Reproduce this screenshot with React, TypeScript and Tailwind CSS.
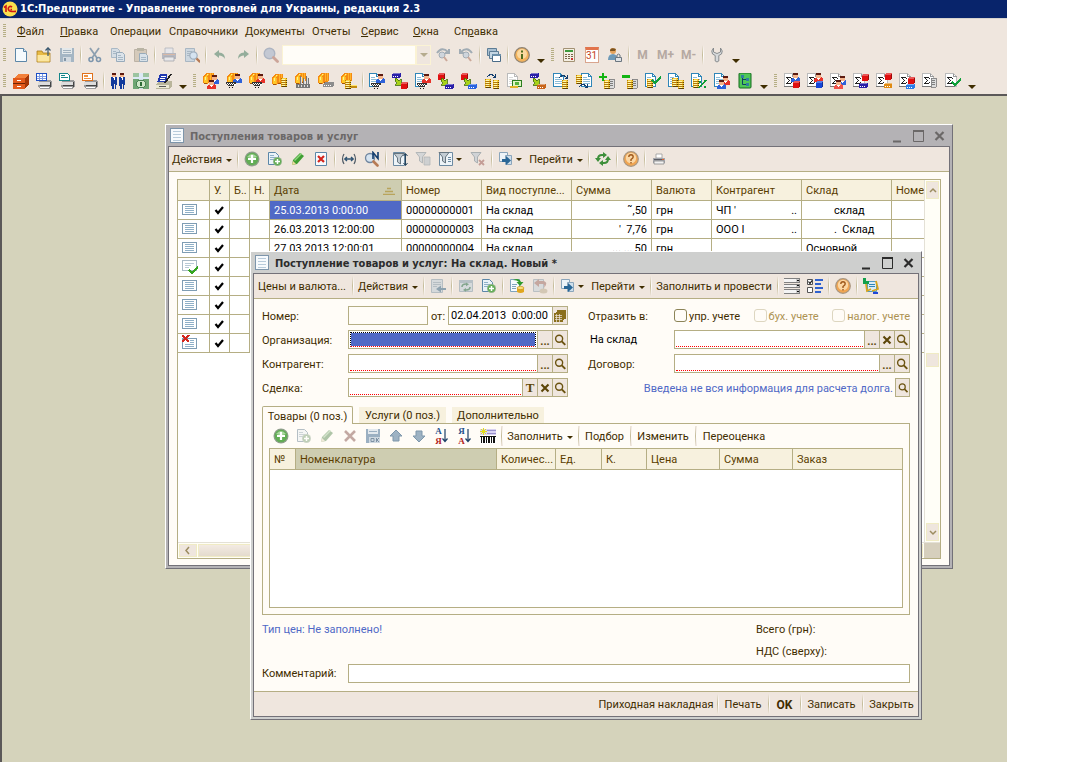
import type { ReactNode } from "react";

/* ---------- small drawing parts shared by the icons ---------- */

type Part = { x?: number; y?: number; c?: string };

const at = (x = 0, y = 0) => `translate(${x} ${y})`;

function Doc({ x, y, c = "#2f86b8" }: Part) {
  return (
    <g transform={at(x, y)}>
      <path d="M.5 .5h7l3 3v10H.5z" fill="#fff" stroke={c} />
      <path d="M7.5 .5v3h3" fill="none" stroke={c} />
      <path d="M2 4.5h4M2 6.5h7M2 8.5h7M2 10.5h7" stroke={c} opacity=".55" />
    </g>
  );
}

function Person({ x, y, c = "#2e62d9" }: Part) {
  return (
    <g transform={at(x, y)}>
      <path d="M0 9V6l2-2h5l2 2v3z" fill={c} />
      <path d="M2 1h5v4H2z" fill="#f4b48c" />
      <path d="M2 0h5v2H2z" fill="#5c1a10" />
      <path d="M3 5h3L4.500 7.500z" fill="#fff" />
    </g>
  );
}

function Cart({ x, y }: Part) {
  return (
    <g transform={at(x, y)}>
      <path d="M0 0h10v2L8 4H2L0 2z" fill="#fff" />
      <path d="M0 0h10v1H0zM0 1h1v1H0zM2 1h1v1H2zM4 1h1v1H4zM6 1h1v1H6zM8 1h2v1H8zM1 2h1v1H1zM3 2h1v1H3zM5 2h1v1H5zM7 2h1v1H7zM2 3h6v1H2z" fill="#333" />
      <path d="M3 5h1v1H3zM6 5h1v1H6z" fill="#111" />
    </g>
  );
}

function Coins({ x, y }: Part) {
  return (
    <g transform={at(x, y)}>
      <path d="M0 0h6v9H0z" fill="#b47a08" />
      <path d="M1 0h4v1H1zM0 1h6v1H0zM0 3h6v1H0zM0 5h6v1H0zM0 7h6v1H0z" fill="#f7cf3c" />
      <path d="M1 1h3v1H1zM1 3h3v1H1zM1 5h3v1H1zM1 7h3v1H1z" fill="#fff6b0" />
      <path d="M5 2h1v1H5zM5 4h1v1H5zM5 6h1v1H5zM1 8h5v1H1z" fill="#5e4104" />
    </g>
  );
}

function Slice({ x, y }: Part) {
  return (
    <g transform={at(x, y)}>
      <path d="M3 0h7l1 1v7l-2 1H6l-2 2H1L0 9V4z" fill="#f58a12" />
      <path d="M4 1h2L4 4v6H1V5z" fill="#ffc928" />
      <path d="M7 0h1v8H7zM9 0h1v8H9zM4 4h1v6H4z" fill="#ffb52a" />
      <path d="M2 4h1v3H2zM4 1h1v1H4z" fill="#fff08a" />
      <path d="M1 10h3v1H1zM6 9h3v1H6z" fill="#a3520a" />
    </g>
  );
}

function Cube({ x, y, c = "#e01010" }: Part) {
  return (
    <g transform={at(x, y)}>
      <path d="M0 2l1-2h6v5l-1 2H0z" fill={c} />
      <path d="M1 0h6L6 2H0z" fill="#fff" opacity=".3" />
      <path d="M6 2l1-2v5l-1 2z" fill="#000" opacity=".3" />
    </g>
  );
}

function Box({ x, y, c = "#2a1fa8" }: Part) {
  return (
    <g transform={at(x, y)}>
      <path d="M0 1l1-1h8v3L8 5H0z" fill={c} />
      <path d="M1 3h1v1H1zM3 3h1v1H3zM5 3h1v1H5z" fill="#fff" />
      <path d="M1 0h7v1H1z" fill="#fff" opacity=".4" />
    </g>
  );
}

function Cash({ x, y }: Part) {
  return (
    <g transform={at(x, y)}>
      <path d="M.5 .5h9v6h-9z" fill="#dff5c4" stroke="#2b7d1e" />
      <path d="M3 2h4v3H3z" fill="#58b23c" />
    </g>
  );
}

const GreenArrow = () => <path d="M4 5l3 3 2-2v6H3l2-2-2-3z" fill="#a8d21a" stroke="#3c6b00" strokeWidth=".8" />;
const Arc = ({ x, y }: Part) => (
  <path transform={at(x, y)} d="M0 3Q4-2 8 3M8.500 0v3.500H5.500" fill="none" stroke="#123d6e" strokeWidth="1.200" />
);
const Tick = ({ x, y, c = "#0fa03a" }: Part) => (
  <path transform={at(x, y)} d="M0 3l3 3 6-6" fill="none" stroke={c} strokeWidth="2.400" />
);
const Pages = ({ x, y }: Part) => (
  <g transform={at(x, y)}>
    <path d="M0 0h5v9H0z" fill="#ddd" stroke="#777" strokeWidth=".8" />
    <path d="M1 2h3M1 4h3M1 6h3" stroke="#666" strokeWidth=".8" />
  </g>
);
const SumDoc = ({ children }: { children?: ReactNode }) => (
  <>
    <path d="M.5 .5h8l3 3v9.500H.5z" fill="#fff" stroke="#bbb" />
    <path d="M8.500 .5v3h3" fill="none" stroke="#999" />
    <path d="M0 13h10v1H0z" fill="#777" />
    <path d="M2 4h5v1H2zM3 5h1v1H3zM4 6h1v1H4zM5 7h1v1H5zM4 8h1v1H4zM3 9h1v1H3zM2 10h5v1H2zM7 5h1v1H7zM7 9h1v1H7z" fill="#222" />
    {children}
  </>
);
const PrinterBase = ({ children }: { children?: ReactNode }) => (
  <>
    <path d="M2 9l3-2h10l1 2v4l-2 3H4l-2-2z" fill="#9a9a9a" />
    <path d="M2 9h12v3H2z" fill="#ddd" />
    <path d="M4 12.500h10M14.500 9v5" stroke="#444" />
    <path d="M4 14h9v1H4z" fill="#fff" />
    {children}
  </>
);
const Funnel = ({ x, y, c = "#67757f" }: Part) => (
  <path transform={at(x, y)} d="M0 .5h10L6.500 5v6l-3-2V5z" fill="#c3ccd3" stroke={c} />
);
const Sheet = ({ c = "#5c87a8" }: Part) => (
  <>
    <path d="M2.500 1.500h8l3 3v10h-11z" fill="#f5fafd" stroke={c} />
    <path d="M10.500 1.500v3h3" fill="#dbe8f0" stroke={c} />
  </>
);
const GreenPlus = ({ x, y }: Part) => (
  <g transform={at(x, y)}>
    <circle cx="4.500" cy="4.500" r="4.500" fill="#8fb586" />
    <circle cx="4.500" cy="4.500" r="3.500" fill="#5fac52" />
    <path d="M4.500 2v5M2 4.500h5" stroke="#fff" strokeWidth="1.500" />
  </g>
);
const Lens = ({ x, y, c = "#7187a0" }: Part) => (
  <g transform={at(x, y)}>
    <path d="M6.500 6.500l4 4" stroke="#b77b55" strokeWidth="2.400" strokeLinecap="round" />
    <circle cx="4.500" cy="4.500" r="3.700" fill="#d5e3f0" stroke={c} strokeWidth="1.200" />
  </g>
);

const art: Record<string, ReactNode> = {
  new: <Sheet />,
  open: (
    <>
      <path d="M1 4h5l1 2h7v9H1z" fill="#e8bb45" stroke="#a97b1c" strokeWidth=".8" />
      <path d="M1.500 8h12v6.500h-12z" fill="#fbe6a0" />
      <path d="M12 9V1M9.500 3.500L12 .8l2.500 2.700" fill="none" stroke="#37566e" strokeWidth="1.200" />
    </>
  ),
  save: (
    <>
      <path d="M1 1h14v14H1z" fill="#a5b6c4" />
      <path d="M3 1h10v6H3z" fill="#e3e8ea" />
      <path d="M4 3.500h8M4 5.500h8" stroke="#a2b2bf" />
      <path d="M4 10h8v5H4z" fill="#d3dae0" />
      <path d="M5 11h2v3H5z" fill="#8496a6" />
    </>
  ),
  cut: (
    <>
      <path d="M3 1l7 10M12 1L5 11" stroke="#8ea0b0" strokeWidth="1.800" />
      <circle cx="4" cy="12.500" r="2" fill="none" stroke="#7d96ad" strokeWidth="1.600" />
      <circle cx="11.500" cy="12.500" r="2" fill="none" stroke="#7d96ad" strokeWidth="1.600" />
    </>
  ),
  copy: (
    <>
      <path d="M1.500 1.500h6l2 2v7h-8z" fill="#d5dde4" stroke="#a9b9c6" />
      <path d="M6.500 5.500h6l2 2v7h-8z" fill="#dbe3ea" stroke="#98abbb" />
      <path d="M8 8.500h3M8 10.500h5M8 12.500h5M3 4.500h3M3 6.500h3" stroke="#a6b7c5" />
    </>
  ),
  paste: (
    <>
      <path d="M1.500 2.500h12v12h-12z" fill="#d5cabb" stroke="#bcb3a6" />
      <path d="M4 1h7v3H4z" fill="#b9b4a4" />
      <path d="M6.500 6.500h6l2 2v6h-8z" fill="#d9e2e9" stroke="#98abbb" />
      <path d="M8 10.500h5M8 12.500h5" stroke="#a6b7c5" />
    </>
  ),
  print: (
    <>
      <path d="M4 1h8v6H4z" fill="#e6e6ea" stroke="#b3b5bb" strokeWidth=".8" />
      <path d="M1 6h14v6H1z" fill="#b6b8c0" />
      <path d="M2 7h12v1H2z" fill="#d8b8a6" />
      <path d="M3 10h10v4H3z" fill="#e8e8ea" stroke="#a3a5ab" strokeWidth=".8" />
    </>
  ),
  preview: (
    <>
      <path d="M1.500 1.500h9v13h-9z" fill="#cdd7e0" stroke="#a9b7c3" />
      <path d="M3 4.500h5M3 6.500h3M3 8.500h3" stroke="#a9b7c3" />
      <Lens x={5} y={4} c="#a0afbd" />
    </>
  ),
  undo: <path d="M2 7l5-4v2.500q6 0 6 6.500-2-3.500-6-3.500V11z" fill="#94ad9b" />,
  redo: <path d="M14 7L9 3v2.500q-6 0-6 6.500 2-3.500 6-3.500V11z" fill="#94ad9b" />,
  search: (
    <g opacity=".6">
      <circle cx="6.500" cy="6.500" r="5.300" fill="#a6b5cc" stroke="#8294b0" strokeWidth="1.400" />
      <path d="M10.500 10.500l4 4" stroke="#b57a6c" strokeWidth="2.800" strokeLinecap="round" />
    </g>
  ),
  findNext: (
    <g opacity=".75">
      <path d="M2 6Q7-1 13 5M14 2v4h-4" fill="none" stroke="#8799a6" strokeWidth="2" />
      <circle cx="7" cy="8" r="3" fill="#c4d0dc" stroke="#8799a6" />
      <path d="M9 10l3 4" stroke="#c09482" strokeWidth="2" />
    </g>
  ),
  findPrev: (
    <g opacity=".75">
      <path d="M14 6Q9-1 3 5M2 2v4h4" fill="none" stroke="#8799a6" strokeWidth="2" />
      <circle cx="8" cy="8" r="3" fill="#c4d0dc" stroke="#8799a6" />
      <path d="M10 10l3 4" stroke="#c09482" strokeWidth="2" />
    </g>
  ),
  windows: (
    <>
      <path d="M1.500 1.500h9v7h-9z" fill="#a9c0d2" stroke="#5d7d96" />
      <path d="M3.500 4.500h9v7h-9z" fill="#c5d6e3" stroke="#5d7d96" />
      <path d="M6.500 7.500h8v7h-8z" fill="#fff" stroke="#4a6c88" />
      <path d="M6 7h9v2H6z" fill="#6b8faa" />
    </>
  ),
  info: (
    <>
      <circle cx="8" cy="8" r="7.300" fill="#f3b35c" stroke="#8e8271" strokeWidth="1.200" />
      <circle cx="8" cy="7" r="5" fill="#fbd9a0" />
      <path d="M7 3.500h2v2H7zM7 7h2v5H7z" fill="#4f6d1d" />
    </>
  ),
  calc: (
    <>
      <path d="M2.500 1.500h11v13h-11z" fill="#f4efe2" stroke="#a39274" />
      <path d="M4 3h8v2H4z" fill="#3c9a3c" />
      <path d="M4 7h2v1H4zM7 7h2v1H7zM10 7h2v1h-2zM4 9h2v1H4zM7 9h2v1H7zM10 9h2v1h-2zM4 11h2v1H4zM7 11h2v1H7z" fill="#77654a" />
      <path d="M10 11h2v2h-2z" fill="#c33" />
    </>
  ),
  lockUser: (
    <>
      <circle cx="6" cy="4" r="3" fill="#e3a35c" />
      <path d="M3 4q0-4 6-2l-1 2z" fill="#7b5320" />
      <path d="M1 13q0-6 5-6 4 0 5 6z" fill="#6e9ab8" />
      <path d="M8.500 10.500h6v4h-6z" fill="#dfe3e6" stroke="#6b7680" />
      <path d="M10 10V8q1.500-1.800 3 0v2" fill="none" stroke="#6b7680" />
    </>
  ),
  wrench: (
    <path d="M4.500 1v4l3.500 1.500L11.500 5V1q3 3 1 6L9.800 8.500V14q-1.800 2-3.600 0V8.500L3.500 7q-2-3 1-6z" fill="#d6d9db" stroke="#808487" strokeWidth=".9" />
  ),
  cabinet: (
    <>
      <path d="M1 5l4-4h11v10l-4 5H1z" fill="#a53606" />
      <path d="M1 5l4-4h11l-4 4z" fill="#f2803a" />
      <path d="M0 5h12v5H0zM0 11h12v5H0z" fill="#e2591a" />
      <path d="M4 7h4v1H4zM4 13h4v1H4z" fill="#fff" />
      <path d="M0 10h12v1H0z" fill="#6e2402" />
    </>
  ),
  printBlue: (
    <PrinterBase>
      <path d="M.5 .5h10v7H.5z" fill="#fff" stroke="#1e4fc4" />
      <path d="M1 3h9v1H1zM1 5h9v1H1zM3 1h1v6H3zM6 1h1v6H6z" fill="#7f9be4" />
    </PrinterBase>
  ),
  printTeal: (
    <PrinterBase>
      <path d="M.5 .5h8l2 2v5H.5z" fill="#fff" stroke="#14868a" />
      <path d="M2 2h4v1H2zM2 4h7v1H2z" fill="#14868a" />
    </PrinterBase>
  ),
  printOrange: (
    <PrinterBase>
      <path d="M.5 .5h10v7H.5z" fill="#fff" stroke="#e0701a" />
      <path d="M2 2h4v2H2zM2 5h7v1H2z" fill="#f0913f" />
    </PrinterBase>
  ),
  men: (
    <>
      <path d="M1 4h6v5l-1 7H2L1 9zM9 4h6v5l-1 7h-4L9 9z" fill="#123a9c" />
      <path d="M2 0h4v2H2zM10 0h4v2h-4z" fill="#5c1a10" />
      <path d="M2 2h4v2H2zM10 2h4v2h-4z" fill="#f4b48c" />
      <path d="M3 4h2v4zM11 4h2v4z" fill="#fff" />
      <path d="M4 11h1v5H4zM12 11h1v5h-1z" fill="#efe6de" />
    </>
  ),
  money: (
    <>
      <path d="M0 0h16v4H0z" fill="#9cc4a0" />
      <path d="M0 4h16v2H0z" fill="#dce9f5" />
      <path d="M0 6h16v10H0z" fill="#6fa573" />
      <path d="M6 6h4v10H6z" fill="#cfe0e4" />
      <ellipse cx="8" cy="11" rx="5" ry="3.500" fill="#cfe6c8" stroke="#4c8353" />
      <path d="M6 0h4v4H6z" fill="#dce9f5" />
      <path d="M7 9h2v4H7z" fill="#2c6a35" />
    </>
  ),
  register: (
    <>
      <path d="M0 11l4-3h12v5l-2 3H0z" fill="#b9b59b" />
      <path d="M0 12h13v3H0z" fill="#ece9d4" />
      <path d="M4 1h7v8H1z" fill="#2038b0" />
      <path d="M5 3h5v1H5zM4 5h5v1H4zM4 7h5v1H4z" fill="#fff" />
      <path d="M15 1l-6 9" stroke="#222" strokeWidth="1.500" />
      <path d="M3 13h7v1H3z" fill="#555" />
    </>
  ),
  c1: <><Slice x={0} y={0} /><Person x={7} y={2} /><Person x={4} y={7} c="#e8322a" /></>,
  c2: <><Slice x={1} y={0} /><Person x={7} y={1} /><Cart x={0} y={9} /></>,
  c3: <><Slice x={0} y={0} /><Person x={7} y={1} c="#e8322a" /><Cart x={3} y={9} /></>,
  c4: <><Slice x={0} y={1} /><Coins x={9} y={5} /></>,
  c5: (
    <>
      <Slice x={0} y={0} />
      <path d="M1 11h14v4H1zM5 3h1v8H5zM8 5h1v6H8zM11 3h1v8h-1zM13 5h1v6h-1z" fill="#777" />
      <path d="M6 4h1v7H6zM9 6h1v5H9zM12 4h1v7h-1zM3 12h1v2H3zM6 12h1v2H6zM9 12h1v2H9zM12 12h1v2h-1z" fill="#ddd" />
    </>
  ),
  c6: <><Slice x={0} y={0} /><path d="M5 11l2-2h9v3l-1 2H5z" fill="#8c8c8c" /><path d="M6 12h1v1H6zM8 12h1v1H8zM10 12h1v1h-1zM12 12h1v1h-1z" fill="#fff" /></>,
  c7: <><Slice x={0} y={0} /><Coins x={4} y={7} /><path d="M10 12h6v3h-6z" fill="#c28b10" /><path d="M10 12h6v1h-6z" fill="#ffe36b" /></>,
  d1: <><Doc /><Person x={7} y={1} /><Cart x={2} y={10} /></>,
  d2: <><Box x={0} y={0} /><GreenArrow /><Cube x={9} y={9} /></>,
  d3: <><Doc /><Person x={7} y={1} c="#e8322a" /><Cart x={2} y={10} /></>,
  d4: <><Cube x={0} y={0} /><GreenArrow /><Box x={7} y={11} /></>,
  d5: <><Cube x={0} y={0} /><GreenArrow /><Box x={7} y={11} c="#2a63e0" /></>,
  d6: <><Coins x={1} y={6} /><Coins x={9} y={7} /><Arc x={3} y={1} /></>,
  d7: <><Doc c="#bbb" /><Cash x={5} y={7} /><path d="M3 13h8v2H3z" fill="#e3b42a" /></>,
  d8: <><Box x={0} y={0} /><GreenArrow /><Box x={7} y={11} c="#c8651b" /></>,
  d9: <><Doc /><Coins x={9} y={7} /><Arc x={6} y={2} /></>,
  d10: <><Doc x={5} y={0} /><Coins x={0} y={2} /><Arc x={3} y={11} /></>,
  d11: <><Pages x={10} y={6} /><Coins x={5} y={7} /><path d="M3 0h2v3h3v2H5v3H3V5H0V3h3z" fill="#12b412" /></>,
  d12: <><Pages x={10} y={6} /><Coins x={5} y={7} /><path d="M0 2h8v3H0z" fill="#12b412" /></>,
  d13: <><Doc /><Coins x={2} y={6} /><Tick x={7} y={4} /></>,
  d14: <><Doc /><Coins x={4} y={5} /><Coins x={10} y={7} /></>,
  d15: (
    <>
      <Doc />
      <Coins x={2} y={6} />
      <path d="M8 15l7-8" stroke="#0f9c33" strokeWidth="1.600" />
      <path d="M8 8h2v2H8zM13 13h2v2h-2z" fill="#0f9c33" />
    </>
  ),
  d16: <><Doc /><Person x={7} y={3} c="#e8322a" /><Person x={3} y={7} /></>,
  tree: (
    <>
      <rect x="2" y="0" width="12" height="15" rx="1" fill="#4fc758" stroke="#146b1c" />
      <path d="M5.500 3v8.500H9M5.500 6.500H9" fill="none" stroke="#0d3f66" />
      <path d="M4 2h3v3H4zM9 5h3v3H9zM9 10h3v3H9z" fill="#2f7fa0" />
    </>
  ),
  s1: <SumDoc><Person x={7} y={0} /><Cube x={9} y={8} /></SumDoc>,
  s2: <SumDoc><Person x={7} y={0} c="#e8322a" /><Cube x={9} y={8} c="#1646d8" /></SumDoc>,
  s3: <SumDoc><Person x={8} y={3} /><Person x={4} y={7} c="#f0524a" /></SumDoc>,
  s4: <SumDoc><Cube x={9} y={1} /><Box x={6} y={10} /></SumDoc>,
  s5: <SumDoc><Cube x={9} y={0} /><Box x={8} y={10} c="#e08a12" /></SumDoc>,
  s6: <SumDoc><Cube x={9} y={4} /><Box x={7} y={11} c="#2a7de8" /></SumDoc>,
  s7: <SumDoc><Pages x={9} y={5} /></SumDoc>,
  s8: <SumDoc><Tick x={7} y={6} /></SumDoc>,
  add: (
    <>
      <circle cx="8" cy="8" r="7.500" fill="#8f9e8b" />
      <circle cx="8" cy="8" r="6.300" fill="#62ad55" />
      <path d="M3 6q5-6 10 0-5 2-10 0z" fill="#a8d69d" />
      <path d="M8 4v8M4 8h8" stroke="#fff" strokeWidth="2.200" />
    </>
  ),
  addCopy: (
    <>
      <path d="M1.500 1.500h7l3 3v9h-10z" fill="#eaf2f8" stroke="#5c87a8" />
      <path d="M3 4.500h4M3 6.500h6M3 8.500h4" stroke="#8fb0c8" />
      <GreenPlus x={6} y={6} />
    </>
  ),
  edit: (
    <>
      <path d="M2 14l1-5 7-7 4 3-7 8z" fill="#3f9e33" />
      <path d="M4 9l7-7 1 1-7 7z" fill="#8fd67f" />
      <path d="M2 14l1-4 3 3z" fill="#f1d9a0" />
    </>
  ),
  remove: (
    <>
      <path d="M2.500 1.500h11v13h-11z" fill="#f7fbfe" stroke="#5c87a8" />
      <path d="M5 5l6 6M11 5l-6 6" stroke="#d4261d" strokeWidth="2.200" />
    </>
  ),
  period: (
    <>
      <path d="M3 3q-3 5 0 10M13 3q3 5 0 10" fill="none" stroke="#4f5b66" strokeWidth="1.200" />
      <path d="M4 8h8M6 6L3.800 8 6 10M10 6l2.200 2L10 10" fill="none" stroke="#2f5473" strokeWidth="1.400" />
    </>
  ),
  findNum: (
    <>
      <circle cx="6" cy="7" r="4.500" fill="#d5e3f0" stroke="#7187a0" strokeWidth="1.300" />
      <path d="M9.500 10.500l4 4" stroke="#b77b55" strokeWidth="2.600" strokeLinecap="round" />
      <path d="M9 8V1.500l5 6V1" fill="none" stroke="#123d6e" strokeWidth="1.600" />
    </>
  ),
  filter: (
    <>
      <path d="M1.500 1.500h11v13h-11z" fill="#eef4f8" stroke="#6c8aa2" />
      <Funnel x={2} y={2} />
      <path d="M13.500 3v11M11.500 12l2 2.500 2-2.500M11.500 5l2-2.500 2 2.500" fill="none" stroke="#24435c" />
    </>
  ),
  filterGray: (
    <g opacity=".6">
      <path d="M9 6h6v8H9z" fill="#b9c2c9" stroke="#8c989f" strokeWidth=".8" />
      <Funnel x={1} y={1} c="#8c989f" />
    </g>
  ),
  filterList: (
    <>
      <path d="M1.500 1.500h13v13h-13z" fill="#eef4f8" stroke="#6c8aa2" />
      <path d="M10 6.500h3M10 8.500h3M10 10.500h3" stroke="#6c8aa2" />
      <Funnel x={1} y={1} />
    </>
  ),
  filterOff: (
    <g opacity=".7">
      <Funnel x={1} y={1} c="#8c989f" />
      <path d="M9 9l5 5M14 9l-5 5" stroke="#b27f78" strokeWidth="1.800" />
    </g>
  ),
  goto: (
    <>
      <path d="M1.500 1.500h8v9h-8z" fill="#eef4f8" stroke="#8aa5bb" />
      <path d="M7.500 4.500h6v9h-6z" fill="#cfdfec" stroke="#8aa5bb" />
      <path d="M4 8h4V5l5 4.500L8 14v-3H4z" fill="#2a6796" />
    </>
  ),
  refresh: (
    <>
      <path d="M3 8q0-4 4-4h1M13 8q0 4-4 4H8" fill="none" stroke="#3d8f3a" strokeWidth="2" />
      <path d="M8 1l4 3-4 3zM8 9l-4 3 4 3zM0 7h6l-3 4zM16 9h-6l3-4z" fill="#3d8f3a" />
    </>
  ),
  help: (
    <>
      <circle cx="8" cy="8" r="7.300" fill="#f0a552" stroke="#a89680" strokeWidth="1.200" />
      <circle cx="8" cy="7" r="5.200" fill="#fbd7a4" />
      <path d="M5.800 6q0-2.300 2.200-2.300T10.200 6Q10.200 7 8 8.500V10M8 11v1.500" fill="none" stroke="#a05a1c" strokeWidth="1.400" />
    </>
  ),
  printer: (
    <>
      <path d="M5 3h6v4H5z" fill="#fff" stroke="#9a9a9a" strokeWidth=".8" />
      <path d="M2 7h12v5H2z" fill="#a5a7ad" />
      <path d="M3 8h10v1H3z" fill="#5b5d65" />
      <path d="M3 10h10v3H3z" fill="#f2f2f2" stroke="#888" strokeWidth=".8" />
      <path d="M11 8h2v1h-2z" fill="#e2612a" />
    </>
  ),
  moveList: (
    <g opacity=".6">
      <path d="M1.500 1.500h11v13h-11z" fill="#c4d1da" stroke="#8fa2b0" />
      <path d="M3 4.500h8M3 6.500h8M3 8.500h4" stroke="#8fa2b0" />
      <path d="M16 10h-5V7.500L6 11l5 3.500V12h5z" fill="#4f7590" />
    </g>
  ),
  reread: (
    <g opacity=".6">
      <path d="M1.500 2.500h13v11h-13z" fill="#c4d1da" stroke="#8ea2b0" />
      <path d="M1 2h14v3H1z" fill="#93a8b6" />
      <path d="M4 9q0-3 4-3M12 9q0 3-4 3" fill="none" stroke="#3d7a58" strokeWidth="1.600" />
      <path d="M8 4.500l3 1.700-3 2zM8 10l-3 2 3 1.800z" fill="#3d7a58" />
    </g>
  ),
  post: (
    <>
      <path d="M1.500 1.500h9v12h-9z" fill="#f5fafd" stroke="#7fa3bd" />
      <path d="M3 6.500h5M3 8.500h4M3 10.500h4" stroke="#7fa3bd" />
      <path d="M4 2q6-3 8 2h2.500l-3.500 4-3.500-4H10Q8 2 4 2z" fill="#2f9b2b" />
      <path d="M8 10h7v4q-3.500 2-7 0z" fill="#e0a61e" />
      <ellipse cx="11.500" cy="10" rx="3.500" ry="1.600" fill="#fbe07a" stroke="#c68f16" strokeWidth=".7" />
    </>
  ),
  unpost: (
    <g opacity=".5">
      <path d="M1.500 1.500h10v12h-10z" fill="#c4d1da" stroke="#8499a8" />
      <path d="M11 3H7V1L2 5l5 4V6h4q2 0 1 4 5-6-1-7z" fill="#9c6a62" />
      <ellipse cx="11.500" cy="13" rx="4" ry="2.500" fill="#b9aa8c" />
    </g>
  ),
  rows: (
    <>
      <path d="M0 0h16v5H0zM0 6h16v4H0zM0 11h16v5H0z" fill="#808080" />
      <path d="M0 1h12v3H0zM0 7h12v2H0zM0 12h12v3H0z" fill="#f4f4f4" />
      <path d="M12 1h3v3h-3zM12 7h3v2h-3zM12 12h3v3h-3z" fill="#c9c9c9" />
      <path d="M13 2h2v1h-2zM13 7h2v1h-2zM13 13h2v1h-2z" fill="#111" />
    </>
  ),
  checks: (
    <>
      <path d="M.5 1.500h5v5h-5zM.5 9.500h5v5h-5z" fill="#fff" stroke="#555" />
      <path d="M1.500 3.500l1.500 2 2-3" fill="none" stroke="#111" strokeWidth="1.200" />
      <path d="M8 1h8v2H8zM8 5h6v2H8zM8 9h8v2H8zM8 13h6v2H8z" fill="#2f62cf" />
    </>
  ),
  exchange: (
    <>
      <path d="M4.500 3.500h9v10h-9z" fill="#d9ecf5" stroke="#4d9ac4" />
      <path d="M6 6.500h6M6 8.500h6" stroke="#2f86b8" />
      <path d="M0 0h3v3h3v3H0z" fill="#12a04c" />
      <path d="M3 6l1 7 4-2M13 3l2 8-6 2" fill="none" stroke="#d8a61c" strokeWidth="1.800" />
      <path d="M10 14h5v2h-5z" fill="#1f46d8" />
    </>
  ),
  saveOk: (
    <>
      <path d="M1 1h14v14H1z" fill="#9bb0c2" />
      <path d="M3 1h10v5H3z" fill="#e3e9ee" />
      <path d="M4 3.500h8" stroke="#9bb0c2" />
      <path d="M4 9h11v6H4z" fill="#cfd9e1" />
      <path d="M6 10.500h3v3H6zM11.500 10v4M14 10l-2 2 2 2" fill="none" stroke="#7f93a5" />
    </>
  ),
  cross: <path d="M3 3l10 10M13 3L3 13" stroke="#c3a9a3" strokeWidth="2.600" />,
  up: <path d="M8 2l6 6h-3v5H5V8H2z" fill="#9db2c3" stroke="#7e97ab" />,
  down: <path d="M8 14l6-6h-3V3H5v5H2z" fill="#9db2c3" stroke="#7e97ab" />,
  barcode: (
    <>
      <path d="M0 1h16v6H0z" fill="#d9d2f2" />
      <path d="M7 2h9v1H7zM7 5h9v1H7z" fill="#9a92cc" />
      <path d="M3.500 0v7M0 3.500h7M1 1l5 5M6 1L1 6" stroke="#e2dc1c" strokeWidth="1.200" />
      <path d="M0 8h16v8H0z" fill="#fff" />
      <path d="M0 8h16v1H0zM1 9h1v6H1zM3 9h2v6H3zM6 9h1v6H6zM8 9h2v6H8zM11 9h1v6h-1zM13 9h2v6h-2z" fill="#111" />
    </>
  ),
  list: (
    <>
      <path d="M.5 2.500h14v10H.5z" fill="#fff" stroke="#7f9db4" />
      <path d="M3 4.500h9M3 6.500h9M3 8.500h9M3 10.500h9" stroke="#8fb0c8" />
    </>
  ),
  listOk: (
    <>
      <path d="M.5 1.500h14v10H.5z" fill="#fff" stroke="#a9bac6" />
      <path d="M3 4.500h9M3 6.500h6M3 8.500h4" stroke="#b9cad6" />
      <Tick x={7} y={8} c="#35a51f" />
    </>
  ),
  listDel: (
    <>
      <path d="M.5 3.500h14v10H.5z" fill="#fff" stroke="#7f9db4" />
      <path d="M8 5.500h4M8 7.500h4M3 9.500h9M3 11.500h9" stroke="#8fb0c8" />
      <path d="M0 0l7 7M7 0L0 7" stroke="#d4261d" strokeWidth="2" />
    </>
  ),
  form: (
    <>
      <path d="M1.500 .5h13v14h-13z" fill="#f7fafd" stroke="#7d95ab" />
      <path d="M4 3.500h8M4 6.500h8M4 9.500h8M4 12.500h8" stroke="#b8cbdb" />
    </>
  ),
  lens: (
    <>
      <circle cx="7" cy="6.500" r="4" fill="none" stroke="#6b5310" strokeWidth="1.600" />
      <path d="M10 9.500l4 4" stroke="#6b5310" strokeWidth="2.200" />
    </>
  ),
  clear: <path d="M4 4l8 8M12 4l-8 8" stroke="#5c4508" strokeWidth="2.400" />,
  pick: (
    <>
      <path d="M5 1h10v10h-2v2h-2v2H1V5h2V3h2z" fill="#8a6f1c" />
      <path d="M2 7.500h8M2 10h8M2 12.500h8M4 6v9M7 6v9" stroke="#efe6de" strokeWidth=".8" />
    </>
  ),
  min: <path d="M3 13.500h8" stroke="currentColor" strokeWidth="2" />,
  max: (
    <>
      <path d="M2.500 3v10.500h10V3" fill="none" stroke="currentColor" />
      <path d="M2 3h11" stroke="currentColor" strokeWidth="2" />
    </>
  ),
  close: <path d="M3.500 4l8 8M11.500 4l-8 8" stroke="currentColor" strokeWidth="2.200" />,
};

const crisp = /^(c\d|d\d|s\d|print[BTO]|men|money|register|cabinet|rows|barcode|list|form|pick)/;

function Icon({ name, size = "size-4" }: { name: string; size?: string }) {
  return (
    <svg viewBox="0 0 16 16" className={`${size} shrink-0`} shapeRendering={crisp.test(name) ? "crispEdges" : "auto"} aria-hidden>
      {art[name]}
    </svg>
  );
}

/* ---------- toolbar pieces ---------- */

const IconBtn = ({ name, wide, dim }: { name: string; wide?: boolean; dim?: boolean }) => (
  <button aria-label={name} className={`flex h-6 shrink-0 items-center justify-center ${wide ? "w-8 gap-0.5" : "w-[23px]"} ${dim ? "opacity-50 grayscale-50" : ""}`}>
    <Icon name={name} />
    {wide && <Caret />}
  </button>
);

const Caret = () => <span className="border-x-[3px] border-t-[3px] border-x-transparent border-t-[#3f2d00]" />;
const More = () => (
  <button aria-label="more" className="flex h-6 w-[15px] shrink-0 items-end justify-center pb-1">
    <span className="border-x-4 border-t-4 border-x-transparent border-t-[#3f2d00]" />
  </button>
);
const Sep = () => (
  <span className="flex h-6 w-[5px] shrink-0 justify-center py-0.5">
    <span className="w-px bg-linear-to-b from-[#efe6de] via-[#c4bb98] to-[#efe6de]" />
    <span className="w-px bg-linear-to-b from-[#efe6de] via-white to-[#efe6de]" />
  </span>
);
const Grip = () => (
  <span className="mx-[3px] h-3.5 w-[3px] shrink-0 bg-[repeating-linear-gradient(to_bottom,#b5ae84_0_1px,transparent_1px_2px)]" />
);

function TextBtn({ text, w, caret }: { text: string; w: string; caret?: boolean }) {
  return (
    <button className={`flex h-6 shrink-0 items-center justify-center gap-1 pt-0.5 whitespace-nowrap ${w}`}>
      {text}
      {caret && <Caret />}
    </button>
  );
}

const Icons = ({ names }: { names: string }) => (
  <>
    {names.split(" ").map((n, i) => (n === "|" ? <Sep key={i} /> : <IconBtn key={i} name={n} />))}
  </>
);

/* ---------- windows ---------- */

function Win({ title, active, className, children }: { title: string; active?: boolean; className: string; children: ReactNode }) {
  return (
    <section
      className={`absolute flex flex-col border border-t-white border-l-white border-r-[#737178] border-b-[#737178] px-0.5 pb-0.5 ${
        active ? "bg-[#cecfce] text-[#2b2b2b]" : "bg-[#b4b2b5] text-[#6b6868]"
      } ${className}`}
    >
      <header className="flex h-[21px] items-center gap-[5px] pr-0.5 pl-px">
        <Icon name="form" />
        <h2 className="flex-1 pt-0.5 font-['DejaVu_Sans_Condensed','DejaVu_Sans'] text-[11px] font-bold">{title}</h2>
        <div className="flex gap-[5px]">
          {["min", "max", "close"].map((n) => (
            <button key={n} aria-label={n}>
              <Icon name={n} />
            </button>
          ))}
        </div>
      </header>
      <div className="flex flex-1 flex-col border border-[#737178] bg-[#fffcf7] text-[#3f2d00]">{children}</div>
    </section>
  );
}

const bar = "flex h-[25px] items-center bg-[#efe6de]";

const columns = [
  ["", "w-8"],
  ["У.", "w-5"],
  ["Б..", "w-5"],
  ["Н.", "w-5"],
  ["Дата", "w-[132px]"],
  ["Номер", "w-20"],
  ["Вид поступле...", "w-[90px]"],
  ["Сумма", "w-20"],
  ["Валюта", "w-[60px]"],
  ["Контрагент", "w-[90px]"],
  ["Склад", "w-[90px]"],
  ["Номе", "w-8"],
];

const rows = [
  ["list", "25.03.2013 0:00:00", "00000000001", "На склад", "˜,50", "грн", "ЧП '", "..", "склад"],
  ["list", "26.03.2013 12:00:00", "00000000003", "На склад", "'  7,76", "грн", "ООО І", "..", ".  Склад"],
  ["list", "27.03.2013 12:00:01", "00000000004", "На склад", "... ...,50", "грн", "", "", "Основной"],
  ["listOk"],
  ["list"],
  ["list"],
  ["list"],
  ["listDel"],
];

const edge = "h-[19px] overflow-hidden border-r border-b border-[#b5ae84] px-1 whitespace-nowrap";
const cell = `${edge} pt-0.5`;

function Journal() {
  return (
    <Win title="Поступления товаров и услуг" className="top-7 left-[163px] h-[445px] w-[788px]">
      <div className={`${bar} border-b border-[#b5ae84]`}>
        <TextBtn text="Действия" w="w-[66px]" caret />
        <Sep />
        <Icons names="add addCopy edit remove | period findNum | filter filterGray" />
        <IconBtn name="filterList" wide />
        <Icons names="filterOff |" />
        <IconBtn name="goto" wide />
        <TextBtn text="Перейти" w="w-[60px]" caret />
        <Icons names="| refresh | help | printer" />
      </div>
      <div className="m-2 mt-[7px] mb-1.5 flex flex-1 flex-col border border-[#b5ae84] bg-white">
        <div className="flex flex-1">
          <div className="flex-1 overflow-hidden">
            <table className="w-full table-fixed border-separate border-spacing-0">
              <thead>
                <tr className="text-left text-[#5a3d00]">
                  {columns.map(([name, w]) => (
                    <th
                      key={name}
                      className={`h-[21px] overflow-hidden border-r border-b border-[#b5ae84] px-1 pt-0.5 font-normal whitespace-nowrap last:border-r-0 ${w} ${
                        name === "Дата" ? "bg-[#cecdb1]" : "bg-[#f7f1de]"
                      }`}
                    >
                      {name === "Дата" ? (
                        <span className="flex items-center justify-between pr-0.5">
                          {name}
                          <svg viewBox="0 0 12 8" className="h-2 w-3" aria-hidden>
                            <path d="M4 1.500h4M2 4.500h8M0 7.500h12" stroke="#b8a45c" strokeWidth="1.500" />
                          </svg>
                        </span>
                      ) : (
                        name
                      )}
                    </th>
                  ))}
                </tr>
              </thead>
              <tbody className="text-black">
                {rows.map(([icon, date, num, kind, sum, cur, agent, tail, store], i) => (
                  <tr key={i}>
                    <td className={edge}>
                      <Icon name={icon} />
                    </td>
                    <td className={edge}>
                      <svg viewBox="0 0 10 10" className="size-2.5" aria-label="проведен">
                        <path d="M1.500 5l2.500 3 5-6" fill="none" stroke="#000" strokeWidth="2.200" />
                      </svg>
                    </td>
                    <td className={cell} />
                    <td className={cell} />
                    <td className={`${cell} ${i === 0 ? "bg-[#5069c6] text-white" : ""}`}>{date}</td>
                    <td className={cell}>{num}</td>
                    <td className={cell}>{kind}</td>
                    <td className={`${cell} text-right whitespace-pre`}>{sum}</td>
                    <td className={cell}>{cur}</td>
                    <td className={cell}>
                      <span className="flex justify-between">
                        <span>{agent}</span>
                        <span>{tail}</span>
                      </span>
                    </td>
                    <td className={`${cell} whitespace-pre ${i < 2 ? "pl-8" : ""}`}>{store}</td>
                    <td className={`${cell} border-r-0`} />
                  </tr>
                ))}
              </tbody>
            </table>
          </div>
          <div className="flex w-4 flex-col items-center border-l border-[#e4e1d6] bg-[#fffef7] p-px">
            <ScrollBtn d="M2 6l3-3 3 3" />
            <div className="flex w-full flex-1 flex-col">
              <div className="h-[154px]" />
              <div className="h-3.5 border border-[#f0ebc4] bg-[#efe6de]" />
            </div>
            <ScrollBtn d="M2 3l3 3 3-3" />
          </div>
        </div>
        <div className="flex h-4 border-t border-[#e4e1d6] bg-[#fffef7]">
          <div className="flex flex-1 gap-px p-px">
            <ScrollBtn d="M6 1L3 4.500 6 8" />
            <div className="flex-1 border border-[#f0ebc4] bg-linear-to-b from-[#f3ebe3] to-[#e4dbcd]" />
          </div>
          <div className="w-4 bg-[#d6cfbd]" />
        </div>
      </div>
    </Win>
  );
}

const ScrollBtn = ({ d }: { d: string }) => (
  <button aria-label="scroll" className="flex h-[18px] max-h-full w-full max-w-[18px] items-center justify-center border border-[#f0ebc4] bg-[#efe6de]">
    <svg viewBox="0 0 10 9" className="h-[9px] w-2.5" aria-hidden>
      <path d={d} fill="none" stroke="#9c8c60" strokeWidth="1.500" />
    </svg>
  </button>
);

function FieldBtn({ name, text }: { name?: string; text?: string }) {
  return (
    <button aria-label={name ?? text} className="flex w-[15px] shrink-0 items-center justify-center border-l border-[#b5ae84] bg-[#efe6de] text-[#5c4508]">
      {name && <Icon name={name} size="size-3.5" />}
      {text === "T" ? <b className="font-['Liberation_Serif'] text-[13px]">T</b> : <b className="pt-1">{text}</b>}
    </button>
  );
}

function Field({ id, children, focus }: { id: string; children?: ReactNode; focus?: boolean }) {
  return (
    <div className="flex h-[19px] min-w-0 flex-1 border border-[#b5ae84] bg-white">
      <div className="flex min-w-0 flex-1 p-px">
        <input
          id={id}
          className={`w-full min-w-0 border-b border-dotted border-b-[#ff0000] outline-none ${
            focus ? "border-t border-r border-l border-t-black border-r-black border-l-black bg-[#5069c6] bg-clip-padding" : ""
          }`}
        />
      </div>
      {children}
    </div>
  );
}

function Check({ text, off }: { text: string; off?: boolean }) {
  return (
    <label className={`flex items-center gap-0.5 whitespace-nowrap ${off ? "text-[#ad9252]" : ""}`}>
      <input type="checkbox" disabled={off} className={`size-[13px] appearance-none rounded-[3px] border bg-[#fffcf7] ${off ? "border-[#ddd6c0]" : "border-[#8c8458]"}`} />
      <span className="pt-0.5">{text}</span>
    </label>
  );
}

const itemCols = [
  ["№", "w-[26px]"],
  ["Номенклатура", "w-[201px]"],
  ["Количес...", "w-[59px]"],
  ["Ед.", "w-[46px]"],
  ["К.", "w-[45px]"],
  ["Цена", "w-[73px]"],
  ["Сумма", "w-[73px]"],
  ["Заказ", "w-[109px]"],
];

function Receipt() {
  return (
    <Win active title="Поступление товаров и услуг: На склад. Новый *" className="top-[155px] left-[248px] w-[672px]">
      <div className={`${bar} border-b border-[#b5ae84]`}>
        <TextBtn text="Цены и валюта..." w="w-24" />
        <Sep />
        <TextBtn text="Действия" w="w-[66px]" caret />
        <Icons names="| moveList | reread addCopy | post unpost |" />
        <IconBtn name="goto" wide />
        <TextBtn text="Перейти" w="w-[60px]" caret />
        <Sep />
        <TextBtn text="Заполнить и провести" w="w-[122px]" />
        <Icons names="| rows checks | help | exchange" />
      </div>

      <div className="flex flex-col px-2 pt-[7px] pb-2">
        <div className="grid grid-cols-[86px_220px_1fr_86px_236px] items-center gap-y-[5px]">
          <label htmlFor="number" className="pt-0.5">Номер:</label>
          <div className="flex items-center">
            <input id="number" className="h-[19px] w-20 border border-[#b5ae84] outline-none" />
            <label htmlFor="date" className="flex-1 pt-0.5 text-center">
              от:
            </label>
            <div className="flex h-[19px] w-[120px] border border-[#b5ae84] bg-white">
              <input id="date" defaultValue="02.04.2013  0:00:00" className="min-w-0 flex-1 px-0.5 whitespace-pre text-black outline-none" />
              <FieldBtn name="pick" />
            </div>
          </div>
          <span />
          <span className="pt-0.5">Отразить в:</span>
          <div className="flex justify-between">
            <Check text="упр. учете" />
            <Check text="бух. учете" off />
            <Check text="налог. учете" off />
          </div>

          <label htmlFor="org" className="pt-0.5">Организация:</label>
          <Field id="org" focus>
            <FieldBtn text="..." />
            <FieldBtn name="lens" />
          </Field>
          <span />
          <label htmlFor="store" className="mr-1 pl-0.5 text-black">
            На склад
          </label>
          <Field id="store">
            <FieldBtn text="..." />
            <FieldBtn name="clear" />
            <FieldBtn name="lens" />
          </Field>

          <label htmlFor="agent" className="pt-0.5">Контрагент:</label>
          <Field id="agent">
            <FieldBtn text="..." />
            <FieldBtn name="lens" />
          </Field>
          <span />
          <label htmlFor="contract" className="pt-0.5">Договор:</label>
          <Field id="contract">
            <FieldBtn text="..." />
            <FieldBtn name="lens" />
          </Field>

          <label htmlFor="deal" className="pt-0.5">Сделка:</label>
          <Field id="deal">
            <FieldBtn text="T" />
            <FieldBtn name="clear" />
            <FieldBtn name="lens" />
          </Field>
          <div className="col-span-3 flex items-center justify-end gap-0.5">
            <a href="#debt" className="pt-0.5 whitespace-nowrap text-[#5069c6]">
              Введена не вся информация для расчета долга.
            </a>
            <button aria-label="Долг" className="flex h-[19px] w-[15px] items-center justify-center border border-[#b5ae84] bg-[#efe6de]">
              <Icon name="lens" size="size-3" />
            </button>
          </div>
        </div>

        <div className="mt-[9px] flex items-end gap-1.5">
          <button className="relative -mb-px h-[18px] w-[91px] rounded-t-xs border border-b-0 border-[#b5ae84] bg-[#fffcf7] pt-0.5">Товары (0 поз.)</button>
          <button className="h-4 w-[87px] bg-[#f7f1de] pt-0.5">Услуги (0 поз.)</button>
          <button className="h-4 w-[92px] bg-[#f7f1de] pt-0.5">Дополнительно</button>
        </div>
        <div className="border border-[#b5ae84] px-1.5 pb-1.5">
          <div className="flex h-6 items-center">
            <Icons names="add" />
            <IconBtn name="addCopy" dim />
            <IconBtn name="edit" dim />
            <Icons names="cross saveOk up down" />
            {["АЯ", "ЯА"].map(([a, b]) => (
              <button key={a} aria-label={`Сортировка ${a}-${b}`} className="flex w-[23px] items-center justify-center">
                <span className="flex flex-col font-['Liberation_Serif'] text-[9px] leading-[10px] font-bold">
                  <span className="text-[#1c4f8c]">{a}</span>
                  <span className="text-[#b0231c]">{b}</span>
                </span>
                <svg viewBox="0 0 6 14" className="h-3.5 w-1.5" aria-hidden>
                  <path d="M3 0v12M.5 9.500L3 12.500l2.500-3" fill="none" stroke="#1c3f66" strokeWidth="1.200" />
                </svg>
              </button>
            ))}
            <Icons names="barcode |" />
            <TextBtn text="Заполнить" w="w-[72px]" caret />
            <Sep />
            <TextBtn text="Подбор" w="w-[47px]" />
            <Sep />
            <TextBtn text="Изменить" w="w-[60px]" />
            <Sep />
            <TextBtn text="Переоценка" w="w-[72px]" />
          </div>
          <div className="min-h-40 border border-[#b5ae84] bg-white">
            <table className="w-full table-fixed border-separate border-spacing-0">
              <thead>
                <tr className="text-left text-[#5a3d00]">
                  {itemCols.map(([name, w]) => (
                    <th
                      key={name}
                      className={`h-[21px] border-r border-b border-[#b5ae84] px-1 pt-0.5 font-normal whitespace-nowrap last:border-r-0 ${w} ${
                        name === "Номенклатура" ? "bg-[#cecdb1]" : "bg-[#f7f1de]"
                      }`}
                    >
                      {name}
                    </th>
                  ))}
                </tr>
              </thead>
            </table>
          </div>
        </div>

        <div className="mt-1 grid grid-cols-[1fr_154px] leading-[22px]">
          <a href="#prices" className="text-[#5069c6]">
            Тип цен: Не заполнено!
          </a>
          <span>Всего (грн):</span>
          <span className="col-start-2">НДС (сверху):</span>
        </div>
        <div className="mt-px flex items-center">
          <label htmlFor="comment" className="w-[86px]">
            Комментарий:
          </label>
          <input id="comment" className="h-[19px] flex-1 border border-[#b5ae84] bg-white outline-none" />
        </div>
      </div>

      <footer className={`${bar} justify-end border-t border-[#b5ae84]`}>
        <TextBtn text="Приходная накладная" w="w-[118px]" />
        <Sep />
        <TextBtn text="Печать" w="w-[46px]" />
        <Sep />
        <button className="w-[27px] pt-0.5 text-[12px] font-bold">OK</button>
        <Sep />
        <TextBtn text="Записать" w="w-[57px]" />
        <Sep />
        <TextBtn text="Закрыть" w="w-[53px]" />
      </footer>
    </Win>
  );
}

const menu = [
  ["", "Ф", "айл", "w-[43px]"],
  ["", "П", "равка", "w-[50px]"],
  ["Операции", "", "", "w-[59px]"],
  ["Справочники", "", "", "w-[76px]"],
  ["Документы", "", "", "w-[67px]"],
  ["Отчеты", "", "", "w-[49px]"],
  ["", "С", "ервис", "w-[52px]"],
  ["", "О", "кна", "w-[41px]"],
  ["Сп", "р", "авка", "w-[50px]"],
];

export default function App() {
  return (
    <div className="min-h-screen bg-white pr-[85px] font-['Roboto',sans-serif] text-[11px] leading-[14px] text-[#3f2d00]">
      <div className="flex min-h-screen flex-col bg-[#efe6de]">
        <header className="flex h-[19px] items-center gap-0.5 border-b border-[#d6d3ce] bg-[#08246b] pl-0.5 text-white">
          <svg viewBox="0 0 16 16" className="size-4" aria-hidden>
            <circle cx="8" cy="8" r="7.500" fill="#fbe04e" />
            <path d="M2 6.500l2-1.500v6M10 6.200Q8.500 4.800 7 6T7 9.500Q8 10.800 14 10.400M10 8.500h-1.500" fill="none" stroke="#d01616" strokeWidth="1.600" />
          </svg>
          <h1 className="font-['DejaVu_Sans_Condensed','DejaVu_Sans'] text-[11px] font-bold whitespace-nowrap">
            1С:Предприятие - Управление торговлей для Украины, редакция 2.3
          </h1>
        </header>

        <nav className="flex h-6 items-center">
          <Grip />
          <div className="flex pt-0.5 pl-2">
            {menu.map(([a, b, c, w]) => (
              <button key={a + b} className={`text-left ${w}`}>
                {a}
                <u>{b}</u>
                {c}
              </button>
            ))}
          </div>
        </nav>

        <div className="flex h-6 items-center">
          <Grip />
          <Icons names="new open save | cut copy paste | print preview | undo redo | search" />
          <select aria-label="Поиск" className="h-5 w-[134px] appearance-none border border-[#fbf3d4] bg-[#fffdf8]" />
          <span className="flex h-5 w-[15px] items-center justify-center border border-[#fbf3d4]">
            <span className="border-x-4 border-t-4 border-x-transparent border-t-[#b5ab8e]" />
          </span>
          <Icons names="findNext findPrev | windows | info" />
          <More />
          <Grip />
          <IconBtn name="calc" />
          <button aria-label="Календарь" className="flex w-[23px] justify-center">
            <span className="h-4 w-3.5 border border-t-[3px] border-[#d9a58e] border-t-[#e2744c] bg-white text-[10px] leading-3 text-[#c2401c]">31</span>
          </button>
          <Icons names="lockUser |" />
          {["M", "M+", "M-"].map((m) => (
            <button key={m} className="w-[23px] text-[12px] font-bold text-[#b5a9a2]">
              {m}
            </button>
          ))}
          <Icons names="| wrench" />
          <More />
        </div>

        <div className="flex h-[27px] items-center">
          <Grip />
          <Icons names="cabinet printBlue printTeal printOrange | men money register" />
          <More />
          <Grip />
          <Icons names="c1 c2 c3 c4 c5 c6 c7 | d1 d2 d3 d4 d5 d6 d7 d8 d9 d10 d11 d12 d13 d14 d15 d16 tree" />
          <More />
          <Grip />
          <Icons names="s1 s2 s3 s4 s5 s6 s7 s8" />
          <More />
        </div>

        <main className="relative flex-1 border-t-2 border-l-2 border-[#5b5858] bg-[#d5d3bb]">
          <Journal />
          <Receipt />
        </main>
      </div>
    </div>
  );
}
